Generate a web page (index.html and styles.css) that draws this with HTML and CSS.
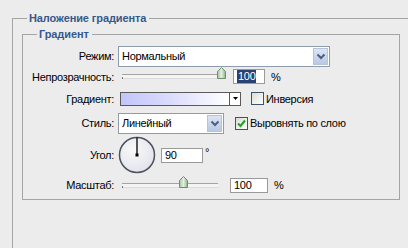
FILE: index.html
```html
<!DOCTYPE html>
<html lang="ru">
<head>
<meta charset="utf-8">
<link rel="stylesheet" href="styles.css">
</head>
<body>
<fieldset class="outer">
  <legend class="legend">Наложение градиента</legend>
  <fieldset class="inner">
    <legend class="legend">Градиент</legend>
    <div class="rows">
      <div class="row r-mode">
        <span class="label">Режим:</span>
        <div class="select select-mode">
          <span class="select-text">Нормальный</span>
          <span class="dd-btn"><svg width="10" height="7" viewBox="0 0 10 7"><path d="M1.5 1.5 L5 5 L8.5 1.5" fill="none" stroke="#4a5f86" stroke-width="2"/></svg></span>
        </div>
      </div>
      <div class="row r-opacity">
        <span class="label">Непрозрачность:</span>
        <div class="ctl">
          <div class="slider slider-opacity"><span class="tick"></span><span class="thumb" style="left:95px"><svg width="9" height="12" viewBox="0 0 9 12"><defs><linearGradient id="tg1" x1="0" y1="0" x2="1" y2="0"><stop offset="0" stop-color="#a9c6a4"/><stop offset="0.5" stop-color="#e4efe2"/><stop offset="1" stop-color="#8fb08a"/></linearGradient></defs><path d="M0.5 11.5 V4.5 L4.5 0.5 L8.5 4.5 V11.5 Z" fill="url(#tg1)" stroke="#6e8f6a"/></svg></span></div>
          <div class="num num-opacity"><span class="hl">100</span></div>
          <span class="unit">%</span>
        </div>
      </div>
      <div class="row r-grad">
        <span class="label">Градиент:</span>
        <div class="ctl">
          <div class="grad-box"></div>
          <span class="grad-btn"><svg width="5" height="3" viewBox="0 0 5 3"><path d="M0 0 H5 L2.5 3 Z" fill="#000"/></svg></span>
          <span class="check"></span>
          <span class="check-label">Инверсия</span>
        </div>
      </div>
      <div class="row r-style">
        <span class="label">Стиль:</span>
        <div class="ctl">
          <div class="select select-style">
            <span class="select-text">Линейный</span>
            <span class="dd-btn"><svg width="10" height="7" viewBox="0 0 10 7"><path d="M1.5 1.5 L5 5 L8.5 1.5" fill="none" stroke="#4a5f86" stroke-width="2"/></svg></span>
          </div>
          <span class="check checked"><svg width="9" height="9" viewBox="0 0 9 9"><path d="M1 4.5 L3.5 7 L8 1.5" fill="none" stroke="#21a121" stroke-width="2"/></svg></span>
          <span class="check-label">Выровнять по слою</span>
        </div>
      </div>
      <div class="row r-angle">
        <span class="label">Угол:</span>
        <div class="ctl">
          <svg class="dial" width="38" height="38" viewBox="0 0 38 38"><defs><radialGradient id="dg" cx="0.4" cy="0.35" r="0.7"><stop offset="0" stop-color="#f8f8fa"/><stop offset="1" stop-color="#e2e3ea"/></radialGradient></defs><circle cx="19" cy="19" r="17.5" fill="url(#dg)" stroke="#4d5160" stroke-width="1.5"/><line x1="19" y1="19" x2="19" y2="1.5" stroke="#000" stroke-width="1.3"/><rect x="17.5" y="17.5" width="3" height="3" fill="#000"/></svg>
          <div class="num num-angle">90</div>
          <span class="unit deg">°</span>
        </div>
      </div>
      <div class="row r-scale">
        <span class="label">Масштаб:</span>
        <div class="ctl">
          <div class="slider slider-scale"><span class="tick"></span><span class="thumb" style="left:57px"><svg width="9" height="12" viewBox="0 0 9 12"><defs><linearGradient id="tg2" x1="0" y1="0" x2="1" y2="0"><stop offset="0" stop-color="#a9c6a4"/><stop offset="0.5" stop-color="#e4efe2"/><stop offset="1" stop-color="#8fb08a"/></linearGradient></defs><path d="M0.5 11.5 V4.5 L4.5 0.5 L8.5 4.5 V11.5 Z" fill="url(#tg2)" stroke="#6e8f6a"/></svg></span></div>
          <div class="num num-scale">100</div>
          <span class="unit">%</span>
        </div>
      </div>
    </div>
  </fieldset>
</fieldset>
</body>
</html>
```
FILE: styles.css
```css
html, body {
  margin: 0;
  padding: 0;
}
body {
  width: 408px;
  height: 248px;
  overflow: hidden;
  background: #ececec;
  font-family: "Liberation Sans", Arial, sans-serif;
  font-size: 11px;
  letter-spacing: -0.3px;
  color: #000;
}
.outer {
  margin: 12px 0 0 12px;
  width: 396px;
  height: 236px;
  padding: 0;
  border: 1px solid #a5a5a5;
  border-right: none;
  border-bottom: none;
  box-sizing: border-box;
  min-width: 0;
}
.legend {
  font-weight: bold;
  color: #36598a;
  line-height: 13px;
  letter-spacing: -0.1px;
  padding: 0 3px 0 2px;
  margin-left: 14px;
}
.inner {
  margin: 3px 0 0 9px;
  width: 378px;
  padding: 4px 0 4px 0;
  border: 1px solid #a5a5a5;
  box-sizing: border-box;
  min-width: 0;
}
.rows {
  display: flex;
  flex-direction: column;
}
.row {
  display: grid;
  grid-template-columns: 91px auto;
  column-gap: 4px;
  align-items: center;
}
.r-mode { height: 22px; }
.r-opacity { height: 19px; }
.r-grad { height: 25px; }
.r-style { height: 24px; }
.r-angle { height: 40px; }
.r-scale { height: 20px; }
.label {
  text-align: right;
  white-space: nowrap;
}
.ctl {
  display: flex;
  align-items: center;
}
.select {
  position: relative;
  display: flex;
  align-items: center;
  height: 21px;
  box-sizing: border-box;
  background: #fff;
  border: 1px solid #8f9cb0;
}
.select-mode { width: 212px; }
.select-style { width: 106px; }
.select-text {
  flex: 1;
  padding-left: 3px;
}
.dd-btn {
  width: 15px;
  height: 17px;
  margin-right: 1px;
  box-sizing: border-box;
  border: 1px solid #b6c3db;
  background: linear-gradient(#dce5f4, #b9c8e2);
  display: flex;
  align-items: center;
  justify-content: center;
}
.slider {
  position: relative;
  height: 3px;
  margin-left: 4px;
  border-top: 1px solid #a4a4a4;
  background: #f4f4f4;
  border-bottom: 1px solid #dcdcdc;
}
.slider-opacity { width: 100px; margin-right: 11px; }
.slider-scale { width: 96px; margin-right: 12px; }
.tick {
  position: absolute;
  left: 0;
  top: 2px;
  width: 1px;
  height: 2px;
  background: #777;
}
.thumb {
  position: absolute;
  top: -8px;
  display: block;
  line-height: 0;
}
.num {
  height: 15px;
  box-sizing: border-box;
  background: #fff;
  border: 1px solid #9a9a9a;
  line-height: 13px;
  padding-left: 3px;
}
.num-opacity { width: 32px; }
.num-angle { width: 42px; margin-left: 5px; }
.num-scale { width: 38px; }
.hl {
  background: #2a4272;
  color: #fff;
  padding: 0 1px;
  display: inline-block;
  line-height: 13px;
}
.unit {
  margin-left: 6px;
}
.deg {
  margin-left: 2px;
  align-self: flex-start;
  margin-top: 10px;
}
.grad-box {
  width: 110px;
  height: 14px;
  margin-left: 2px;
  box-sizing: border-box;
  border: 1px solid #5a5a5a;
  background: linear-gradient(90deg, #c3c5fa 0%, #dadbfc 45%, #ffffff 100%);
}
.grad-btn {
  width: 11px;
  height: 14px;
  box-sizing: border-box;
  border: 1px solid #5a5a5a;
  border-left: none;
  background: #fff;
  display: flex;
  align-items: center;
  justify-content: center;
}
.check {
  width: 13px;
  height: 13px;
  box-sizing: border-box;
  border: 1px solid #3c536e;
  background: linear-gradient(135deg, #dcdcd5, #ffffff);
  display: flex;
  align-items: center;
  justify-content: center;
  margin-left: 10px;
}
.r-style .check { margin-left: 11px; }
.check-label {
  margin-left: 2px;
}
.dial {
  display: block;
}
```
